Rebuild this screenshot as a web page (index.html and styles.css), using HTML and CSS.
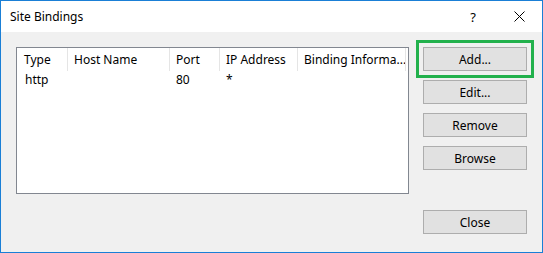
FILE: index.html
```html
<!DOCTYPE html>
<html lang="en">
<head>
    <meta charset="UTF-8">
    <title>Site Bindings</title>
    <link rel="stylesheet" href="styles.css">
</head>
<body>
    <div class="window">
        <div class="titlebar">
            <span class="title">Site Bindings</span>
            <span class="help">?</span>
            <span class="close-x">
                <svg width="11" height="11" viewBox="0 0 11 11">
                    <path d="M0.5 0.5 L10.5 10.5 M10.5 0.5 L0.5 10.5" stroke="#000" stroke-width="1" fill="none"/>
                </svg>
            </span>
        </div>

        <div class="content">
            <div class="listbox">
                <div class="row head">
                    <div class="cell c-type">Type</div>
                    <div class="cell c-host">Host Name</div>
                    <div class="cell c-port">Port</div>
                    <div class="cell c-ip">IP Address</div>
                    <div class="cell c-info">Binding Informa...</div>
                </div>
                <div class="row">
                    <div class="cell c-type">http</div>
                    <div class="cell c-host"></div>
                    <div class="cell c-port">80</div>
                    <div class="cell c-ip">*</div>
                    <div class="cell c-info"></div>
                </div>
            </div>

            <div class="actions">
                <button class="btn focused">Add...</button>
                <button class="btn">Edit...</button>
                <button class="btn">Remove</button>
                <button class="btn">Browse</button>
                <button class="btn close-btn">Close</button>
            </div>
        </div>
    </div>
</body>
</html>
```

FILE: styles.css
```css
body {
    margin: 0;
    font-family: "Noto Sans", sans-serif;
    font-size: 12px;
    color: #000;
    background: #fff;
}
.window {
    width: 543px;
    height: 253px;
    box-sizing: border-box;
    border: 1px solid #1a7fd6;
    display: flex;
    flex-direction: column;
}
.titlebar {
    height: 31px;
    display: flex;
    align-items: center;
    background: #fff;
}
.title {
    padding-left: 9px;
    flex: 1;
}
.help {
    width: 46px;
    text-align: center;
    font-size: 13px;
}
.close-x {
    width: 46px;
    display: flex;
    justify-content: center;
    margin-right: 0;
}
.content {
    flex: 1;
    background: #f0f0f0;
    display: flex;
    gap: 14px;
    padding: 15px 15px 18px 15px;
}
.listbox {
    width: 393px;
    height: 147px;
    box-sizing: border-box;
    border: 1px solid #828790;
    background: #fff;
}
.row {
    display: flex;
    height: 17px;
    line-height: 17px;
}
.row.head {
    height: 23px;
    line-height: 23px;
}
.cell {
    box-sizing: border-box;
    padding-left: 6px;
    white-space: nowrap;
    overflow: hidden;
}
.head .cell {
    border-left: 1px solid #e5e5e5;
}
.row:not(.head) .cell {
    border-left: 1px solid transparent;
}
.c-type { width: 50px; }
.head .c-type, .row .c-type {
    border-left: none;
    padding-left: 7px;
}
.c-host { width: 102px; }
.c-port { width: 50px; }
.c-ip { width: 78px; }
.c-info { width: 109px; }
.head .c-info {
    border-right: 1px solid #e5e5e5;
}
.actions {
    width: 104px;
    display: flex;
    flex-direction: column;
    gap: 9px;
}
.btn {
    width: 104px;
    height: 24px;
    box-sizing: border-box;
    border: 1px solid #adadad;
    background: #e1e1e1;
    font-family: inherit;
    font-size: 12px;
    color: #000;
    padding: 0;
}
.btn.focused {
    outline: 3px solid #22b14c;
    outline-offset: 4px;
}
.close-btn {
    margin-top: auto;
}
```
